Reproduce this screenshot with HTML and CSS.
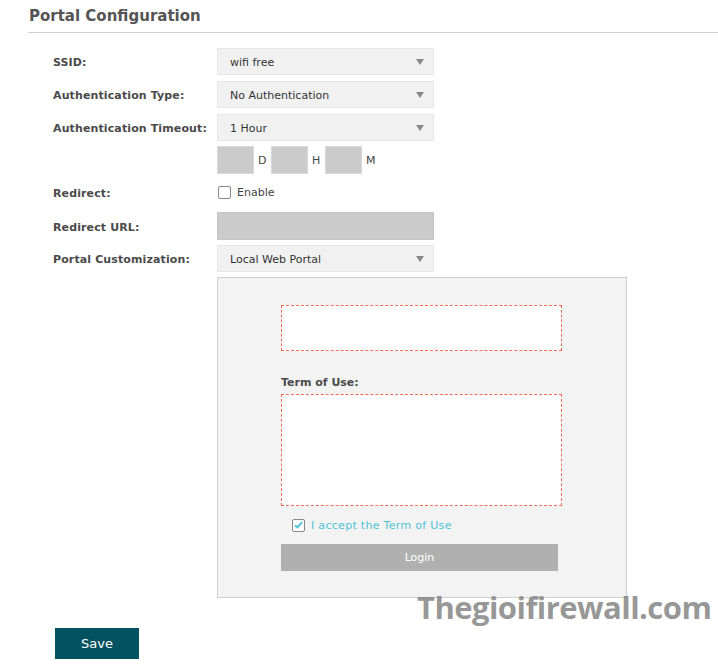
FILE: index.html
```html
<!DOCTYPE html>
<html>
<head>
<meta charset="utf-8">
<link rel="stylesheet" href="styles.css">
</head>
<body>
<div class="page">
  <div class="header"><h1>Portal Configuration</h1></div>
  <div class="form">
    <div class="row r27">
      <div class="label">SSID:</div>
      <div class="select"><span>wifi free</span><i class="arrow"></i></div>
    </div>
    <div class="row r27">
      <div class="label">Authentication Type:</div>
      <div class="select"><span>No Authentication</span><i class="arrow"></i></div>
    </div>
    <div class="row r27">
      <div class="label">Authentication Timeout:</div>
      <div class="select"><span>1 Hour</span><i class="arrow"></i></div>
    </div>
    <div class="row r28 dhm-row">
      <div class="label"></div>
      <div class="dhm">
        <div class="tbox"></div><span class="unit">D</span>
        <div class="tbox"></div><span class="unit">H</span>
        <div class="tbox"></div><span class="unit">M</span>
      </div>
    </div>
    <div class="row r27 redirect-row">
      <div class="label">Redirect:</div>
      <div class="check"><span class="cb"></span><span class="cb-text">Enable</span></div>
    </div>
    <div class="row r28 url-row">
      <div class="label">Redirect URL:</div>
      <div class="url"></div>
    </div>
    <div class="row r27">
      <div class="label">Portal Customization:</div>
      <div class="select"><span>Local Web Portal</span><i class="arrow"></i></div>
    </div>
    <div class="row preview-row">
      <div class="label"></div>
      <div class="preview">
        <div class="dash dash-top"></div>
        <div class="term-label">Term of Use:</div>
        <div class="dash dash-term"></div>
        <div class="accept">
          <span class="cb checked"><svg width="9" height="8" viewBox="0 0 9 8"><path d="M1 4.2 L3.4 6.4 L8 1.2" fill="none" stroke="#4fc3d6" stroke-width="2"/></svg></span>
          <span class="accept-text">I accept the Term of Use</span>
        </div>
        <div class="login">Login</div>
      </div>
    </div>
    <div class="save">Save</div>
  </div>
  <div class="watermark">Thegioifirewall.com</div>
</div>
</body>
</html>
```
FILE: styles.css
```css
* { box-sizing: border-box; }
body {
  margin: 0;
  background: #fff;
  font-family: Tahoma, "DejaVu Sans", sans-serif;
  font-size: 11px;
  color: #333;
}
.page {
  position: relative;
  width: 718px;
  height: 664px;
  overflow: hidden;
}
.header {
  margin-left: 28px;
  height: 33px;
  border-bottom: 1px solid #cfcfcf;
  padding: 6px 0 0 1px;
}
.header h1 {
  margin: 0;
  font-size: 15px;
  font-weight: bold;
  color: #555;
  line-height: 20px;
}
.form {
  padding-left: 53px;
  padding-top: 15px;
}
.row {
  display: flex;
  align-items: center;
  margin-bottom: 6px;
}
.r27 { height: 27px; }
.r28 { height: 28px; margin-bottom: 5px; }
.dhm-row { margin-top: -1px; }
.label {
  width: 164px;
  flex: none;
  font-weight: bold;
  color: #4a4a4a;
  padding-top: 2px;
  letter-spacing: 0.12px;
}
.select {
  width: 217px;
  height: 27px;
  background: #f1f1f1;
  border: 1px solid #e6e6e6;
  display: flex;
  align-items: center;
  justify-content: space-between;
  padding: 0 9px 0 12px;
  color: #333;
}
.select span { padding-top: 1px; }
.arrow {
  width: 0;
  height: 0;
  border-left: 4px solid transparent;
  border-right: 4px solid transparent;
  border-top: 6px solid #888;
}
.dhm {
  display: flex;
  align-items: center;
  height: 28px;
}
.tbox {
  width: 37px;
  height: 28px;
  background: #cbcbcb;
  border: 1px solid #d8d8d8;
}
.unit {
  width: 17px;
  padding-left: 4px;
  padding-top: 1px;
  color: #444;
}
.check {
  display: flex;
  align-items: center;
  padding-left: 1px;
}
.cb {
  width: 13px;
  height: 13px;
  border: 1px solid #888;
  border-radius: 2px;
  background: #fff;
  display: flex;
  align-items: center;
  justify-content: center;
  flex: none;
}
.cb-text {
  margin-left: 6px;
  color: #444;
}
.url {
  width: 217px;
  height: 28px;
  background: #cbcbcb;
  border: 1px solid #c4c4c4;
}
.preview-row {
  align-items: flex-start;
  margin-top: -1px;
  margin-bottom: 0;
}
.preview {
  width: 410px;
  height: 321px;
  background: #f3f3f3;
  border: 1px solid #cfcfcf;
  padding: 27px 0 0 63px;
}
.dash {
  width: 281px;
  background: #fff;
  border: 1px dashed #f36a58;
}
.dash-top { height: 46px; }
.term-label {
  margin-top: 24px;
  padding-top: 1px;
  font-weight: bold;
  color: #4a4a4a;
  height: 19px;
}
.dash-term { height: 112px; }
.accept {
  display: flex;
  align-items: center;
  margin-top: 12px;
  padding-left: 11px;
  height: 14px;
}
.cb.checked { border-color: #888; }
.accept-text {
  margin-left: 6px;
  color: #4fc3d6;
  letter-spacing: 0.3px;
}
.login {
  margin-top: 12px;
  width: 277px;
  height: 27px;
  background: #b0b0b0;
  color: #fff;
  display: flex;
  align-items: center;
  justify-content: center;
}
.save {
  margin-top: 30px;
  margin-left: 2px;
  width: 84px;
  height: 31px;
  background: #03525f;
  color: #fff;
  font-size: 13px;
  display: flex;
  align-items: center;
  justify-content: center;
}
.watermark {
  position: absolute;
  left: 417px;
  top: 586px;
  font-family: "Open Sans", sans-serif;
  font-weight: 700;
  font-size: 31px;
  letter-spacing: -0.55px;
  color: rgba(128, 128, 128, 0.82);
}
```
